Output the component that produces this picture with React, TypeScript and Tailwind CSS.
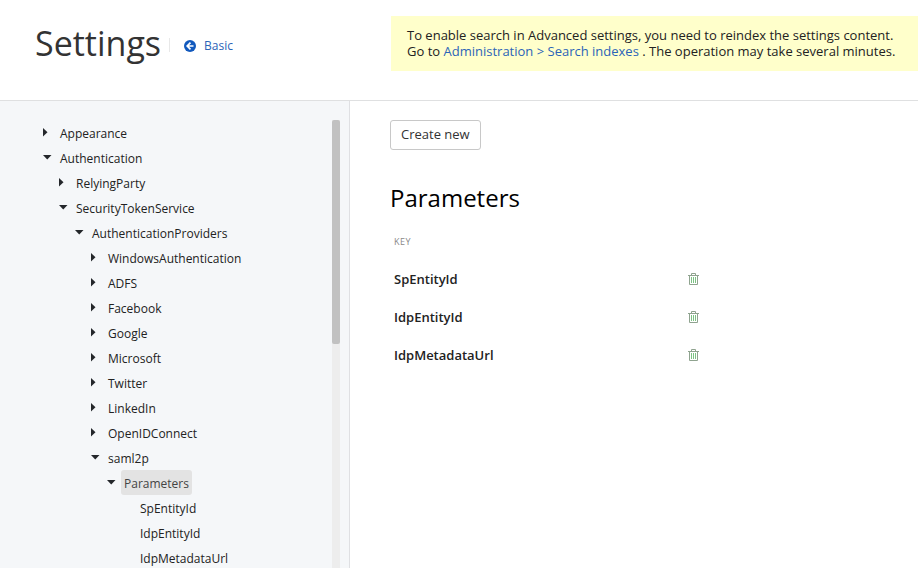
import React from "react";

type NodeState = "closed" | "open" | "leaf";

interface TreeNode {
  label: string;
  state: NodeState;
  selected?: boolean;
  children?: TreeNode[];
}

const tree: TreeNode[] = [
  { label: "Appearance", state: "closed" },
  {
    label: "Authentication",
    state: "open",
    children: [
      { label: "RelyingParty", state: "closed" },
      {
        label: "SecurityTokenService",
        state: "open",
        children: [
          {
            label: "AuthenticationProviders",
            state: "open",
            children: [
              { label: "WindowsAuthentication", state: "closed" },
              { label: "ADFS", state: "closed" },
              { label: "Facebook", state: "closed" },
              { label: "Google", state: "closed" },
              { label: "Microsoft", state: "closed" },
              { label: "Twitter", state: "closed" },
              { label: "LinkedIn", state: "closed" },
              { label: "OpenIDConnect", state: "closed" },
              {
                label: "saml2p",
                state: "open",
                children: [
                  {
                    label: "Parameters",
                    state: "open",
                    selected: true,
                    children: [
                      { label: "SpEntityId", state: "leaf" },
                      { label: "IdpEntityId", state: "leaf" },
                      { label: "IdpMetadataUrl", state: "leaf" },
                    ],
                  },
                ],
              },
            ],
          },
        ],
      },
    ],
  },
];

const keys = ["SpEntityId", "IdpEntityId", "IdpMetadataUrl"];

function Caret({ open }: { open: boolean }) {
  return (
    <svg width="10" height="10" viewBox="0 0 10 10" fill="#24272b" aria-hidden="true">
      {open ? <path d="M0 2h8.500L4.250 6.500z" /> : <path d="M0 0v8.500L4.500 4.250z" />}
    </svg>
  );
}

function Tree({ nodes }: { nodes: TreeNode[] }) {
  return (
    <ul>
      {nodes.map((node) => (
        <li key={node.label}>
          <div className="flex h-[25px] items-center">
            {node.state === "leaf" ? (
              <span className="w-[14px]" />
            ) : (
              <button
                type="button"
                aria-label={`Toggle ${node.label}`}
                aria-expanded={node.state === "open"}
                className="flex h-5 w-[14px] items-center"
              >
                <Caret open={node.state === "open"} />
              </button>
            )}
            <a
              href="#"
              className={
                node.selected
                  ? "h-[25px] rounded-[3px] bg-[#e3e3e3] px-[3px] leading-7 text-[#444]"
                  : "h-[25px] px-[3px] leading-7"
              }
            >
              {node.label}
            </a>
          </div>
          {node.children && (
            <div className="pl-4">
              <Tree nodes={node.children} />
            </div>
          )}
        </li>
      ))}
    </ul>
  );
}

function BackIcon() {
  return (
    <svg width="12" height="12" viewBox="0 0 12 12" fill="none" aria-hidden="true">
      <circle cx="6" cy="6" r="6" fill="#1259bd" />
      <path d="M6.500 2.700 3.200 6l3.300 3.300M3.500 6h6" stroke="#fff" strokeWidth="1.700" />
    </svg>
  );
}

function TrashIcon() {
  return (
    <svg width="11" height="12" viewBox="0 0 11 12" fill="none" aria-hidden="true">
      <path d="M0 2.500h11M3.500 2.500v-2h4v2M1.500 2.500v9h8v-9" stroke="#8fa38f" />
      <path d="M3.500 4v6M5.500 4v6M7.500 4v6" stroke="#7cc283" />
    </svg>
  );
}

export default function App() {
  return (
    <div className="flex h-screen flex-col overflow-hidden bg-white font-['Open_Sans',sans-serif] text-[13px] text-[#222]">
      <header className="flex h-[101px] shrink-0 items-start border-b border-[#dfe0e1]">
        <div className="flex w-[391px] shrink-0 items-center pl-[35px] pt-[19px]">
          <h1 className="text-[34px] leading-[48px] text-[#333]">Settings</h1>
          <span className="ml-2 mt-1 h-[14px] w-px bg-[#e8e8e8]" />
          <a href="#" className="ml-[14px] mt-[6px] flex items-center gap-2 text-[12px] text-[#2b64b8]">
            <BackIcon />
            Basic
          </a>
        </div>
        <p className="mt-4 h-[55px] min-w-0 grow bg-[#ffffcb] pl-4 pt-[11px] text-[13px] leading-4">
          To enable search in Advanced settings, you need to reindex the settings content.
          <br />
          Go to{" "}
          <a href="#" className="text-[#2b64b8]">
            Administration &gt; Search indexes
          </a>{" "}
          . The operation may take several minutes.
        </p>
      </header>
      <div className="flex min-h-0 grow">
        <aside className="flex w-[350px] shrink-0 border-r border-[#dfe0e3] bg-[#f5f7f9] pl-[43px] pr-[9px] pt-[19px]">
          <nav aria-label="Settings" className="min-w-0 grow overflow-hidden text-[12px]">
            <Tree nodes={tree} />
          </nav>
          <div className="w-2 shrink-0 bg-[#ededed]">
            <div className="h-[224px] rounded-[2px] bg-[#c1c1c1]" />
          </div>
        </aside>
        <main className="min-w-0 grow pl-10 pt-[19px]">
          <button
            type="button"
            className="h-[30px] rounded-[3px] border border-[#c8c8c8] px-[10px] text-[13px] text-[#333]"
          >
            Create new
          </button>
          <h2 className="mt-8 text-[24px] leading-8 text-black">Parameters</h2>
          <table className="mt-5 w-[311px] text-left">
            <thead>
              <tr className="h-[27px] align-top text-[9px] leading-4 tracking-wider text-[#888]">
                <th className="px-1 font-normal">KEY</th>
                <td />
              </tr>
            </thead>
            <tbody>
              {keys.map((key) => (
                <tr key={key} className="h-[38px]">
                  <td className="px-1 font-semibold">{key}</td>
                  <td className="w-[13px] pb-[2px]">
                    <button type="button" aria-label={`Delete ${key}`} className="block">
                      <TrashIcon />
                    </button>
                  </td>
                </tr>
              ))}
            </tbody>
          </table>
        </main>
      </div>
    </div>
  );
}
